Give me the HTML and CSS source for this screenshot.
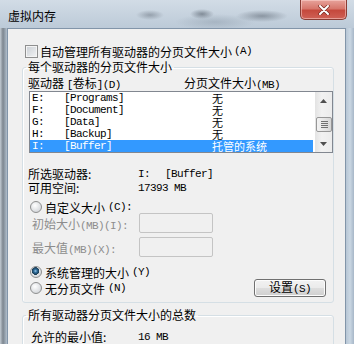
FILE: index.html
```html
<!DOCTYPE html>
<html lang="zh-CN">
<head>
    <meta charset="UTF-8">
    <meta name="viewport" content="width=device-width, initial-scale=1.0">
    <title>虚拟内存</title>
    <link rel="stylesheet" href="styles.css">
</head>
<body>

<div class="window">
    <div class="titlebar">
        <span class="title">虚拟内存</span>
        <button class="close" title="关闭">
            <svg width="12" height="10" viewBox="0 0 12 10">
                <path d="M2 1 L10 9 M10 1 L2 9" stroke="#7a2b24" stroke-width="3.4" stroke-linecap="round"/>
                <path d="M2 1 L10 9 M10 1 L2 9" stroke="#fff" stroke-width="2" stroke-linecap="round"/>
            </svg>
        </button>
    </div>

    <div class="client">
        <label class="check-row"><span class="checkbox"></span>自动管理所有驱动器的分页文件大小<span class="m">(A)</span></label>

        <fieldset class="group">
            <legend>每个驱动器的分页文件大小</legend>
            <div class="list-head">
                <span class="head-drive">驱动器 <span class="m">[</span>卷标<span class="m">](D)</span></span>
                <span>分页文件大小<span class="m">(MB)</span></span>
            </div>

            <div class="listbox">
                <div class="rows">
                    <div class="row"><span class="drv m">E:</span><span class="vol m">[Programs]</span><span class="size">无</span></div>
                    <div class="row"><span class="drv m">F:</span><span class="vol m">[Document]</span><span class="size">无</span></div>
                    <div class="row"><span class="drv m">G:</span><span class="vol m">[Data]</span><span class="size">无</span></div>
                    <div class="row"><span class="drv m">H:</span><span class="vol m">[Backup]</span><span class="size">无</span></div>
                    <div class="row selected"><span class="drv m">I:</span><span class="vol m">[Buffer]</span><span class="size">托管的系统</span></div>
                </div>
                <div class="scrollbar">
                    <div class="sb-btn">
                        <svg width="7" height="4" viewBox="0 0 7 4"><polygon points="3.5,0 7,4 0,4" fill="#505050"/></svg>
                    </div>
                    <div class="sb-track"><div class="sb-thumb"></div></div>
                    <div class="sb-btn">
                        <svg width="7" height="4" viewBox="0 0 7 4"><polygon points="0,0 7,0 3.5,4" fill="#505050"/></svg>
                    </div>
                </div>
            </div>

            <div class="info-row first"><span class="info-label">所选驱动器:</span><span class="m"><span class="drv-sel">I:</span>[Buffer]</span></div>
            <div class="info-row"><span class="info-label">可用空间:</span><span class="m">17393 MB</span></div>

            <div class="radio-row custom"><span class="radio"></span>自定义大小<span class="m">(C):</span></div>
            <div class="field-row"><span class="field-label">初始大小<span class="m">(MB)(I):</span></span><span class="textbox"></span></div>
            <div class="field-row second"><span class="field-label">最大值<span class="m">(MB)(X):</span></span><span class="textbox"></span></div>

            <div class="choice">
                <div class="choice-list">
                    <div class="radio-row"><span class="radio on"></span>系统管理的大小<span class="m">(Y)</span></div>
                    <div class="radio-row"><span class="radio"></span>无分页文件<span class="m">(N)</span></div>
                </div>
                <button class="btn">设置<span class="m">(S)</span></button>
            </div>
        </fieldset>

        <fieldset class="group total">
            <legend>所有驱动器分页文件大小的总数</legend>
            <div class="total-row"><span class="field-label">允许的最小值:</span><span class="m">16 MB</span></div>
        </fieldset>
    </div>
</div>

</body>
</html>
```

FILE: styles.css
```css
body {
    margin: 0;
    width: 354px;
    height: 344px;
    overflow: hidden;
    font-family: "Noto Sans CJK SC", sans-serif;
    font-size: 12px;
    color: #000;
}
.m {
    font-family: "Liberation Mono", monospace;
    font-size: 11px;
    letter-spacing: -0.6px;
}
.window {
    box-sizing: border-box;
    height: 344px;
    padding: 0 8px 0 7px;
    display: flex;
    flex-direction: column;
    background:
        linear-gradient(90deg, #c3cbd3 0, #7d868f 3px, #96a2ae 5px, #b2bfcc 7px) left 28px / 7px 100% no-repeat,
        linear-gradient(90deg, #b7c6d5 0, #cad7e3 4px, #a7b7c8 8px) right 28px / 8px 100% no-repeat,
        radial-gradient(ellipse 14px 5px at 150px 15px, rgba(90, 100, 112, 0.45), transparent),
        radial-gradient(ellipse 12px 5px at 202px 14px, rgba(70, 80, 92, 0.55), transparent),
        radial-gradient(ellipse 26px 6px at 262px 16px, rgba(80, 90, 102, 0.5), transparent),
        radial-gradient(ellipse 40px 8px at 215px 22px, rgba(120, 135, 150, 0.35), transparent),
        linear-gradient(#d2dce6, #bccad8 28px, #b0bfce);
}
.titlebar {
    height: 28px;
    flex-shrink: 0;
    display: flex;
    justify-content: space-between;
    align-items: flex-start;
}
.title {
    margin: 9px 0 0 1px;
    line-height: 13px;
}
.close {
    width: 47px;
    height: 20px;
    margin-right: -1px;
    padding: 0;
    display: flex;
    align-items: center;
    justify-content: center;
    border: 1px solid #8a3d35;
    border-top: none;
    border-radius: 0 0 5px 5px;
    background: linear-gradient(#e7a39b, #d7776c 45%, #c5493d 55%, #cf6156);
    box-shadow: inset 0 0 0 1px rgba(255, 220, 215, 0.5);
}
.client {
    flex: 1;
    background-color: #f0f0f0;
    border: 1px solid #8295a9;
    border-bottom: none;
}
.check-row {
    display: flex;
    align-items: center;
    gap: 2px;
    height: 14px;
    margin: 15px 0 0 17px;
}
.checkbox {
    box-sizing: border-box;
    width: 13px;
    height: 13px;
    border: 1px solid #8e8f8f;
    background: linear-gradient(135deg, #c9ced4, #f3f4f5);
    box-shadow: inset 0 0 0 1px #f4f4f4;
}
.group {
    margin: 2px 11px 0 14px;
    padding: 0 0 5px;
    min-width: 0;
    border: 1px solid #d5dfe5;
    border-radius: 3px;
    box-shadow: inset 1px 1px 0 #fff;
}
.group legend {
    margin-left: 3px;
    padding: 0 2px;
    line-height: 14px;
}
.list-head {
    display: flex;
    height: 14px;
    line-height: 14px;
    margin-top: 2px;
    padding-left: 5px;
}
.head-drive {
    width: 156px;
}
.listbox {
    display: flex;
    margin: 1px 0 0 6px;
    border: 1px solid #828790;
    background-color: #fff;
}
.rows {
    flex: 1;
    margin-right: 2px;
}
.row {
    display: flex;
    height: 12px;
    line-height: 12px;
    padding-left: 2px;
}
.row .drv {
    width: 32px;
}
.row .vol {
    width: 148px;
}
.row .size {
    font-size: 11px;
}
.row.selected {
    background-color: #3399ff;
    color: #fff;
}
.scrollbar {
    width: 17px;
    display: flex;
    flex-direction: column;
    background: linear-gradient(90deg, #e3e3e3, #f2f2f2 40%, #ececec);
}
.sb-btn {
    height: 17px;
    display: flex;
    align-items: center;
    justify-content: center;
}
.sb-track {
    flex: 1;
    padding-top: 8px;
}
.sb-thumb {
    box-sizing: border-box;
    width: 16px;
    height: 15px;
    margin-left: 1px;
    border: 1px solid #979797;
    border-radius: 2px;
    background:
        repeating-linear-gradient(#707070 0 1px, transparent 1px 2px) center / 7px 7px no-repeat,
        linear-gradient(90deg, #f3f3f3, #e6e6e6 50%, #d6d6d6);
}
.info-row {
    display: flex;
    height: 14px;
    line-height: 14px;
    padding-left: 5px;
}
.info-row.first {
    margin-top: 14px;
}
.info-label {
    width: 110px;
}
.drv-sel {
    display: inline-block;
    width: 27px;
}
.radio-row {
    display: flex;
    align-items: center;
    gap: 3px;
    height: 14px;
    padding-left: 7px;
}
.radio-row.custom {
    height: 12px;
    margin-top: 6px;
}
.radio {
    box-sizing: border-box;
    width: 12px;
    height: 12px;
    border: 1px solid #8e8f8f;
    border-radius: 50%;
    background: radial-gradient(circle at 40% 35%, #ffffff, #d3d6da 80%);
}
.radio.on {
    background:
        radial-gradient(circle at 45% 40%, #9ecbe9 0, #2f6d9c 1.6px, #19394f 3.6px, transparent 4px),
        radial-gradient(circle at 40% 35%, #ffffff, #d3d6da 80%);
}
.field-row {
    display: flex;
    align-items: center;
    height: 20px;
    padding-left: 9px;
    color: #8d8d8d;
}
.field-row.second {
    margin-top: 4px;
}
.field-label {
    width: 107px;
}
.textbox {
    box-sizing: border-box;
    width: 74px;
    height: 20px;
    border: 1px solid #c4c4c4;
    border-radius: 2px;
    background-color: #f0f0f0;
}
.choice {
    display: flex;
    align-items: flex-start;
    margin-top: 8px;
}
.choice-list {
    display: flex;
    flex-direction: column;
    gap: 2px;
}
.btn {
    width: 72px;
    height: 18px;
    margin: 14px 7px 0 auto;
    padding: 0;
    font-family: "Noto Sans CJK SC", sans-serif;
    font-size: 12px;
    line-height: 14px;
    color: #000;
    border: 1px solid #707070;
    border-radius: 3px;
    background: linear-gradient(#f2f2f2, #ebebeb 48%, #dddddd 52%, #cfcfcf);
    box-shadow: inset 0 0 0 1px #fcfcfc;
}
.total {
    margin-top: 5px;
}
.total-row {
    display: flex;
    height: 14px;
    line-height: 14px;
    margin-top: 8px;
    padding-left: 8px;
}
```
